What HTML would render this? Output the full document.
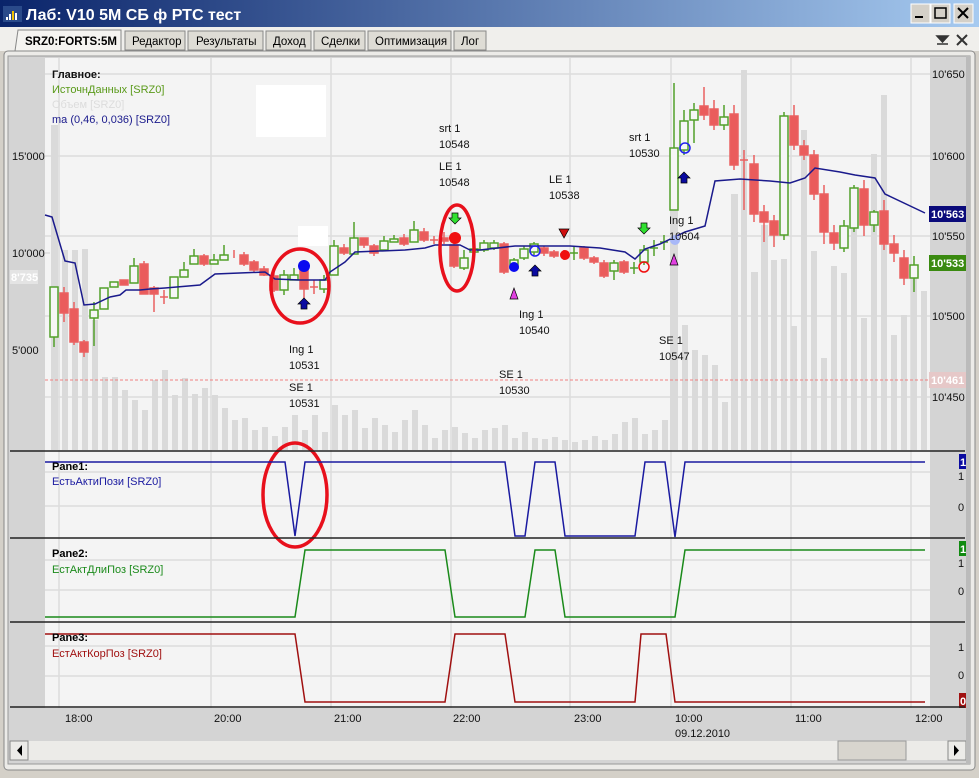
<!DOCTYPE html>
<html><head><meta charset="utf-8"><style>
body{margin:0;width:979px;height:773px;overflow:hidden;background:#d4d0c8;font-family:"Liberation Sans",sans-serif}
svg text{font-family:"Liberation Sans",sans-serif}
</style></head><body>
<svg width="979" height="773" xmlns="http://www.w3.org/2000/svg" font-size="11">
<defs><linearGradient id="tg" x1="0" x2="1"><stop offset="0" stop-color="#0a246a"/><stop offset="1" stop-color="#a6caf0"/></linearGradient></defs>
<rect width="979" height="773" fill="#d4d0c8"/>
<rect x="0" y="0" width="979" height="27" fill="url(#tg)"/>
<rect x="3" y="6" width="19" height="16" fill="#2a4a8a"/>
<rect x="6" y="17" width="2" height="3" fill="#fff"/><rect x="9" y="14" width="2" height="6" fill="#fff"/><rect x="12" y="11" width="2" height="9" fill="#f0c000"/><rect x="15" y="13" width="2" height="7" fill="#fff"/>
<text x="26" y="20" fill="#fff" font-size="16" font-weight="bold">Лаб: V10 5M СБ ф РТС тест</text>
<g fill="#d4d0c8" stroke="#fff"><rect x="911" y="4" width="19" height="19"/><rect x="931" y="4" width="19" height="19"/><rect x="954" y="4" width="19" height="19"/></g>
<rect x="915" y="16" width="8" height="2" fill="#000"/><rect x="935" y="8" width="11" height="10" fill="none" stroke="#000" stroke-width="1.5"/>
<path d="M958 8l10 10M968 8l-10 10" stroke="#000" stroke-width="2"/>
<rect x="0" y="27" width="979" height="24" fill="#f0efec"/>
<g font-size="11.5" fill="#000" stroke="#888">
<rect x="125" y="31" width="60" height="19" fill="#dedcd5"/><rect x="188" y="31" width="75" height="19" fill="#dedcd5"/><rect x="266" y="31" width="45" height="19" fill="#dedcd5"/><rect x="314" y="31" width="51" height="19" fill="#dedcd5"/><rect x="368" y="31" width="83" height="19" fill="#dedcd5"/><rect x="454" y="31" width="32" height="19" fill="#dedcd5"/>
<path d="M15 51L18 30H121V51" fill="#f5f4f1"/></g>
<g font-size="11.5"><text x="25" y="45" font-weight="bold">SRZ0:FORTS:5M</text><text x="132" y="45">Редактор</text><text x="196" y="45">Результаты</text><text x="273" y="45">Доход</text><text x="321" y="45">Сделки</text><text x="375" y="45">Оптимизация</text><text x="461" y="45">Лог</text></g>
<path d="M937 36h11l-5.5 6z M937 44h11" fill="#333" stroke="#333" stroke-width="1.5"/>
<path d="M957 35l10 10M967 35l-10 10" stroke="#333" stroke-width="2"/>
<rect x="4" y="51" width="971" height="719" rx="4" fill="#ecebe8" stroke="#888"/>
<rect x="8" y="56" width="962" height="708" fill="#d4d4d4" stroke="#999"/>
<rect x="45" y="58" width="885" height="650" fill="#f4f4f4"/>
<g stroke="#dcdcdc" stroke-width="1.5">
<path d="M59 58V708M211 58V708M331 58V708M451 58V708M570 58V708M671 58V708M791 58V708M911 58V708"/>
<path d="M45 74H930M45 156H930M45 236H930M45 316H930M45 397H930M45 253H50"/>
<path d="M45 472H930M45 506H930M45 560H930M45 590H930M45 646H930M45 676H930"/>
</g>
<g fill="#dadada">
<rect x="51" y="125" width="7" height="325"/><rect x="62" y="250" width="6" height="200"/><rect x="72" y="250" width="6" height="200"/><rect x="82" y="249" width="6" height="201"/><rect x="92" y="320" width="6" height="130"/><rect x="102" y="377" width="6" height="73"/><rect x="112" y="377" width="6" height="73"/><rect x="122" y="390" width="6" height="60"/><rect x="132" y="400" width="6" height="50"/><rect x="142" y="410" width="6" height="40"/><rect x="152" y="380" width="6" height="70"/><rect x="162" y="370" width="6" height="80"/><rect x="172" y="395" width="6" height="55"/><rect x="182" y="378" width="6" height="72"/><rect x="192" y="394" width="6" height="56"/><rect x="202" y="388" width="6" height="62"/><rect x="212" y="395" width="6" height="55"/><rect x="222" y="408" width="6" height="42"/><rect x="232" y="420" width="6" height="30"/><rect x="242" y="418" width="6" height="32"/><rect x="252" y="430" width="6" height="20"/><rect x="262" y="427" width="6" height="23"/><rect x="272" y="436" width="6" height="14"/><rect x="282" y="427" width="6" height="23"/><rect x="292" y="415" width="6" height="35"/><rect x="302" y="430" width="6" height="20"/><rect x="312" y="415" width="6" height="35"/><rect x="322" y="432" width="6" height="18"/><rect x="332" y="405" width="6" height="45"/><rect x="342" y="415" width="6" height="35"/><rect x="352" y="410" width="6" height="40"/><rect x="362" y="428" width="6" height="22"/><rect x="372" y="418" width="6" height="32"/><rect x="382" y="425" width="6" height="25"/><rect x="392" y="432" width="6" height="18"/><rect x="402" y="420" width="6" height="30"/><rect x="412" y="410" width="6" height="40"/><rect x="422" y="425" width="6" height="25"/><rect x="432" y="438" width="6" height="12"/><rect x="442" y="430" width="6" height="20"/><rect x="452" y="427" width="6" height="23"/><rect x="462" y="433" width="6" height="17"/><rect x="472" y="438" width="6" height="12"/><rect x="482" y="430" width="6" height="20"/><rect x="492" y="428" width="6" height="22"/><rect x="502" y="425" width="6" height="25"/><rect x="512" y="438" width="6" height="12"/><rect x="522" y="432" width="6" height="18"/><rect x="532" y="438" width="6" height="12"/><rect x="542" y="439" width="6" height="11"/><rect x="552" y="437" width="6" height="13"/><rect x="562" y="440" width="6" height="10"/><rect x="572" y="442" width="6" height="8"/><rect x="582" y="440" width="6" height="10"/><rect x="592" y="436" width="6" height="14"/><rect x="602" y="440" width="6" height="10"/><rect x="612" y="434" width="6" height="16"/><rect x="622" y="422" width="6" height="28"/><rect x="632" y="418" width="6" height="32"/><rect x="642" y="434" width="6" height="16"/><rect x="652" y="430" width="6" height="20"/><rect x="662" y="420" width="6" height="30"/><rect x="670" y="150" width="8" height="300"/><rect x="682" y="325" width="6" height="125"/><rect x="692" y="350" width="6" height="100"/><rect x="702" y="355" width="6" height="95"/><rect x="712" y="365" width="6" height="85"/><rect x="722" y="402" width="6" height="48"/><rect x="731" y="194" width="7" height="256"/><rect x="741" y="70" width="6" height="380"/><rect x="751" y="272" width="7" height="178"/><rect x="761" y="225" width="7" height="225"/><rect x="771" y="260" width="6" height="190"/><rect x="781" y="259" width="6" height="191"/><rect x="791" y="326" width="6" height="124"/><rect x="801" y="130" width="6" height="320"/><rect x="811" y="251" width="6" height="199"/><rect x="821" y="358" width="6" height="92"/><rect x="831" y="266" width="6" height="184"/><rect x="841" y="273" width="6" height="177"/><rect x="851" y="218" width="6" height="232"/><rect x="861" y="318" width="6" height="132"/><rect x="871" y="154" width="6" height="296"/><rect x="881" y="95" width="6" height="355"/><rect x="891" y="335" width="6" height="115"/><rect x="901" y="315" width="6" height="135"/><rect x="911" y="275" width="6" height="175"/><rect x="921" y="291" width="6" height="159"/>
</g>
<rect x="256" y="85" width="70" height="52" fill="#fff"/><rect x="298" y="226" width="30" height="20" fill="#fff"/>
<path d="M45 380H930" stroke="#f08080" stroke-dasharray="3,2"/>
<g stroke="#52a02a" fill="#f6f6f6" stroke-width="1.5">
<path d="M54 287V347M94 302V346M134 258V283M184 262V277M194 249V264M214 254V264M224 245V260M284 270V295M294 268V280M324 275V293M334 240V275M354 222V254M384 236V250M394 235V242M414 221V242M464 250V270M474 243V255M484 240V252M494 240V250M514 258V270M524 246V260M534 242V255M574 247V260M614 260V280M634 262V274M644 245V265M654 240V256M664 235V250M674 83V210M684 110V155M694 103V143M724 105V130M784 112V240M844 220V252M854 185V232M874 210V232M914 256V292"/>
<rect x="50" y="287" width="8" height="50"/><rect x="90" y="310" width="8" height="8"/><rect x="100" y="288" width="8" height="21"/><rect x="110" y="282" width="8" height="5"/><rect x="130" y="266" width="8" height="17"/><rect x="170" y="277" width="8" height="21"/><rect x="180" y="270" width="8" height="7"/><rect x="190" y="256" width="8" height="8"/><rect x="210" y="260" width="8" height="4"/><rect x="220" y="255" width="8" height="5"/><rect x="280" y="275" width="8" height="15"/><rect x="290" y="275" width="8" height="5"/><rect x="320" y="280" width="8" height="9"/><rect x="330" y="246" width="8" height="29"/><rect x="350" y="238" width="8" height="16"/><rect x="380" y="241" width="8" height="9"/><rect x="390" y="239" width="8" height="3"/><rect x="410" y="230" width="8" height="12"/><rect x="460" y="258" width="8" height="10"/><rect x="470" y="249" width="8" height="3"/><rect x="480" y="243" width="8" height="7"/><rect x="490" y="243" width="8" height="5"/><rect x="510" y="260" width="8" height="8"/><rect x="520" y="249" width="8" height="9"/><rect x="530" y="244" width="8" height="8"/><rect x="610" y="263" width="8" height="8"/><rect x="640" y="250" width="8" height="12"/><rect x="670" y="148" width="8" height="62"/><rect x="680" y="121" width="8" height="29"/><rect x="690" y="110" width="8" height="10"/><rect x="720" y="117" width="8" height="8"/><rect x="780" y="116" width="8" height="119"/><rect x="840" y="226" width="8" height="22"/><rect x="850" y="188" width="8" height="40"/><rect x="870" y="212" width="8" height="13"/><rect x="910" y="265" width="8" height="13"/>
<path d="M570 253h8M630 268h8M650 248h8M660 242h8"/>
</g>
<g stroke="#ea6060" fill="#ea5c5c" stroke-width="1.5">
<path d="M64 287V322M74 302V345M84 340V357M144 261V294M154 286V312M164 290V304M204 254V266M234 250V258M244 252V266M254 260V272M264 266V276M274 272V292M304 260V300M314 280V294M344 244V255M364 238V248M374 244V256M404 234V246M424 228V242M434 236V244M444 232V244M454 236V268M504 242V274M544 246V256M554 250V258M564 250V260M584 246V260M594 256V264M604 260V278M624 260V274M704 87V120M714 100V130M734 105V170M744 150V210M754 155V222M764 205V242M774 215V247M794 105V150M804 140V160M814 150V200M824 185V244M834 225V250M864 180V236M884 200V250M894 235V262M904 250V285"/>
<rect x="60" y="293" width="8" height="20"/><rect x="70" y="309" width="8" height="33"/><rect x="80" y="342" width="8" height="10"/><rect x="120" y="280" width="8" height="5"/><rect x="140" y="264" width="8" height="30"/><rect x="150" y="288" width="8" height="6"/><rect x="200" y="256" width="8" height="8"/><rect x="240" y="255" width="8" height="9"/><rect x="250" y="262" width="8" height="8"/><rect x="260" y="269" width="8" height="6"/><rect x="270" y="276" width="8" height="14"/><rect x="300" y="268" width="8" height="21"/><rect x="340" y="248" width="8" height="5"/><rect x="360" y="238" width="8" height="7"/><rect x="370" y="246" width="8" height="7"/><rect x="400" y="238" width="8" height="6"/><rect x="420" y="232" width="8" height="8"/><rect x="440" y="238" width="8" height="3"/><rect x="450" y="245" width="8" height="21"/><rect x="500" y="244" width="8" height="28"/><rect x="540" y="248" width="8" height="5"/><rect x="550" y="252" width="8" height="4"/><rect x="580" y="248" width="8" height="10"/><rect x="590" y="258" width="8" height="4"/><rect x="600" y="263" width="8" height="13"/><rect x="620" y="262" width="8" height="10"/><rect x="700" y="106" width="8" height="9"/><rect x="710" y="109" width="8" height="16"/><rect x="730" y="114" width="8" height="51"/><rect x="750" y="164" width="8" height="50"/><rect x="760" y="212" width="8" height="10"/><rect x="770" y="221" width="8" height="14"/><rect x="790" y="116" width="8" height="29"/><rect x="800" y="146" width="8" height="9"/><rect x="810" y="155" width="8" height="39"/><rect x="820" y="194" width="8" height="38"/><rect x="830" y="233" width="8" height="10"/><rect x="860" y="189" width="8" height="36"/><rect x="880" y="211" width="8" height="33"/><rect x="890" y="244" width="8" height="9"/><rect x="900" y="258" width="8" height="20"/>
<path d="M160 297h8M310 287h8M430 240h8M560 254h8M740 160h8"/>
</g>
<polyline fill="none" stroke="#1a1a8c" stroke-width="1.5" points="45,215 52,217 65,261 75,263 84,305 95,304 110,297 120,295 126,290 140,290 150,289 165,288 200,285 215,274 265,272 275,279 300,280 325,280 330,272 345,262 355,252 405,250 425,248 435,245 460,245 470,250 480,250 515,246 570,246 600,248 625,252 635,259 645,249 660,244 685,232 705,226 715,181 740,179 770,181 790,183 805,178 815,168 840,172 855,175 875,178 885,194 925,213"/>
<circle cx="304" cy="266" r="6" fill="#0a0af0"/><path d="M304 298l-6 6h3v5h6v-5h3z" fill="#0a0aa0" stroke="#000" stroke-width=".7"/>
<path d="M455 224l-6-6h3v-5h6v5h3z" fill="#30e030" stroke="#000" stroke-width=".7"/><circle cx="455" cy="238" r="6" fill="#f01010"/>
<circle cx="514" cy="267" r="5" fill="#0a0af0"/><path d="M535 265l-6 6h3v5h6v-5h3z" fill="#0a0aa0" stroke="#000" stroke-width=".7"/><path d="M514 288l-4 11h8z" fill="#e040e0" stroke="#000" stroke-width=".7"/><circle cx="535" cy="251" r="5" fill="none" stroke="#2020f0" stroke-width="1.5"/>
<path d="M564 238l-5-9h10z" fill="#d01010" stroke="#000" stroke-width=".7"/><circle cx="565" cy="255" r="5" fill="#f01010"/>
<path d="M644 234l-6-6h3v-5h6v5h3z" fill="#30e030" stroke="#000" stroke-width=".7"/><circle cx="644" cy="267" r="5" fill="none" stroke="#f01010" stroke-width="1.5"/>
<path d="M674 254l-4 11h8z" fill="#e040e0" stroke="#000" stroke-width=".7"/><circle cx="675" cy="240" r="5" fill="#a8b8f8"/>
<path d="M684 172l-6 6h3v5h6v-5h3z" fill="#0a0aa0" stroke="#000" stroke-width=".7"/><circle cx="685" cy="148" r="5" fill="none" stroke="#2020f0" stroke-width="1.5"/>
<g fill="none" stroke="#e8101c" stroke-width="3.5"><ellipse cx="300" cy="286" rx="29" ry="37"/><ellipse cx="457" cy="248" rx="17" ry="43"/><ellipse cx="295" cy="495" rx="32" ry="52"/></g>
<g font-size="11" fill="#111">
<text x="289" y="353">Ing 1</text><text x="289" y="369">10531</text><text x="289" y="391">SE 1</text><text x="289" y="407">10531</text>
<text x="439" y="132">srt 1</text><text x="439" y="148">10548</text><text x="439" y="170">LE 1</text><text x="439" y="186">10548</text>
<text x="549" y="183">LE 1</text><text x="549" y="199">10538</text><text x="519" y="318">Ing 1</text><text x="519" y="334">10540</text>
<text x="499" y="378">SE 1</text><text x="499" y="394">10530</text><text x="629" y="141">srt 1</text><text x="629" y="157">10530</text>
<text x="669" y="224">Ing 1</text><text x="669" y="240">10604</text><text x="659" y="344">SE 1</text><text x="659" y="360">10547</text>
<text x="52" y="78" font-weight="bold">Главное:</text><text x="52" y="93" fill="#5a9a1a">ИсточнДанных [SRZ0]</text><text x="52" y="108" fill="#dcdcdc">Объем [SRZ0]</text><text x="52" y="123" fill="#1a1a8c">ma (0,46, 0,036) [SRZ0]</text>
<text x="12" y="160">15'000</text><text x="12" y="257">10'000</text><text x="12" y="354">5'000</text>
</g>
<rect x="10" y="270" width="28" height="14" fill="#e4e4e4"/><text x="11" y="281" font-size="11" fill="#fff" font-weight="bold">8'735</text>
<rect x="930" y="58" width="35" height="650" fill="#d4d4d4"/>
<g font-size="11" fill="#111"><text x="932" y="78">10'650</text><text x="932" y="160">10'600</text><text x="932" y="240">10'550</text><text x="932" y="320">10'500</text><text x="932" y="401">10'450</text>
<text x="958" y="480">1</text><text x="958" y="511">0</text><text x="958" y="567">1</text><text x="958" y="595">0</text><text x="958" y="651">1</text><text x="958" y="679">0</text></g>
<rect x="929" y="206" width="37" height="16" fill="#0a0a7a"/><text x="931" y="218" font-size="11" font-weight="bold" fill="#fff">10'563</text>
<rect x="929" y="255" width="37" height="16" fill="#3a8a10"/><text x="931" y="267" font-size="11" font-weight="bold" fill="#fff">10'533</text>
<rect x="929" y="372" width="37" height="16" fill="#e6c8c8"/><text x="931" y="384" font-size="11" font-weight="bold" fill="#fff">10'461</text>
<rect x="959" y="454" width="8" height="15" fill="#0a0aa0"/><text x="960" y="466" font-size="11" font-weight="bold" fill="#fff">1</text>
<rect x="959" y="541" width="8" height="15" fill="#108a10"/><text x="960" y="553" font-size="11" font-weight="bold" fill="#fff">1</text>
<rect x="959" y="693" width="8" height="15" fill="#a01010"/><text x="960" y="705" font-size="11" font-weight="bold" fill="#fff">0</text>
<g stroke-width="1.5" fill="none">
<polyline stroke="#1a1aa0" points="45,462 285,462 295,536 305,462 505,462 515,536 525,536 535,462 555,462 565,536 635,536 645,462 665,462 675,537 685,462 925,462"/>
<polyline stroke="#1a8a1a" points="45,617 295,617 305,550 445,550 455,617 525,617 535,550 555,550 565,617 675,617 685,550 925,550"/>
<polyline stroke="#a01010" points="45,634 295,634 305,702 445,702 455,634 505,634 515,702 635,702 641,634 666,634 675,702 925,702"/>
</g>
<g font-size="11"><text x="52" y="470" font-weight="bold">Pane1:</text><text x="52" y="485" fill="#1a1aa0">ЕстьАктиПози [SRZ0]</text>
<text x="52" y="557" font-weight="bold">Pane2:</text><text x="52" y="573" fill="#1a8a1a">ЕстАктДлиПоз [SRZ0]</text>
<text x="52" y="641" font-weight="bold">Pane3:</text><text x="52" y="657" fill="#a01010">ЕстАктКорПоз [SRZ0]</text></g>
<g stroke="#222" stroke-width="1.5"><path d="M10 451H965M10 538H965M10 622H965M10 707H965"/></g>
<g font-size="11" fill="#111"><text x="65" y="722">18:00</text><text x="214" y="722">20:00</text><text x="334" y="722">21:00</text><text x="453" y="722">22:00</text><text x="574" y="722">23:00</text><text x="675" y="722">10:00</text><text x="675" y="737">09.12.2010</text><text x="795" y="722">11:00</text><text x="915" y="722">12:00</text></g>
<rect x="10" y="741" width="956" height="19" fill="#ecebe8"/>
<rect x="10" y="741" width="18" height="19" fill="#ecebe8" stroke="#888"/><path d="M22 745v11l-5-5.5z" fill="#000"/>
<rect x="948" y="741" width="18" height="19" fill="#ecebe8" stroke="#888"/><path d="M954 745v11l5-5.5z" fill="#000"/>
<rect x="838" y="741" width="68" height="19" fill="#d8d5ce" stroke="#999"/>
<rect x="966" y="56" width="4" height="708" fill="#bbb"/>
</svg>
</body></html>
